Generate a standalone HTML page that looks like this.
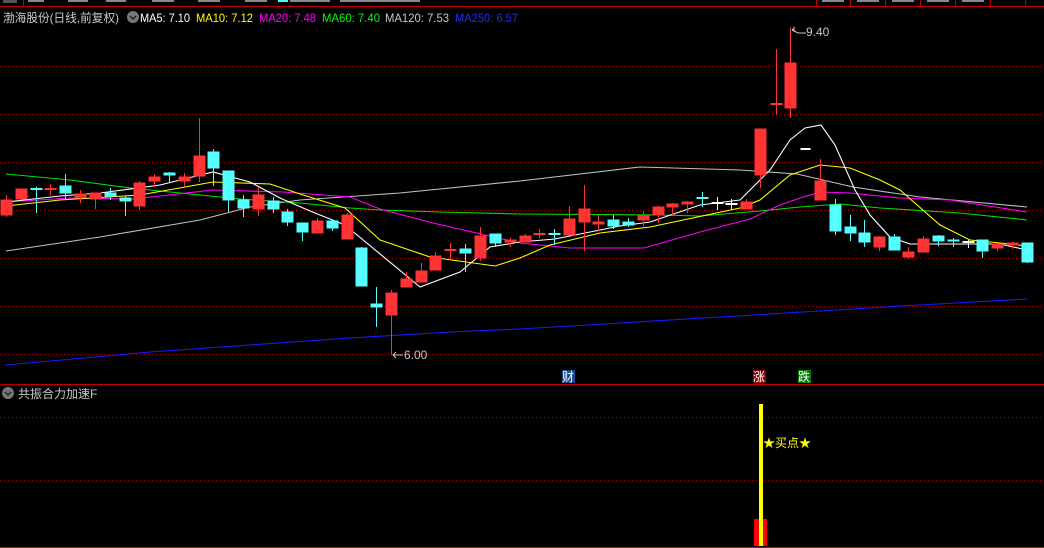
<!DOCTYPE html>
<html><head><meta charset="utf-8"><style>
html,body{margin:0;padding:0;background:#000;width:1044px;height:548px;overflow:hidden}
svg{display:block}
text{font-family:"Liberation Sans","Noto Sans CJK SC",sans-serif;font-size:12px}
</style></head><body>
<svg width="1044" height="548" viewBox="0 0 1044 548" xmlns="http://www.w3.org/2000/svg">
<rect width="1044" height="548" fill="#000"/>
<!-- top strip -->
<line x1="0" y1="6.5" x2="1044" y2="6.5" stroke="#c00000" stroke-width="1"/>
<line x1="23.5" y1="0" x2="23.5" y2="6" stroke="#c00000"/>
<rect x="3" y="0" width="14" height="3" fill="#555"/>
<g stroke="#c00000"><line x1="816.5" y1="0" x2="816.5" y2="6"/><line x1="850.5" y1="0" x2="850.5" y2="6"/><line x1="885.5" y1="0" x2="885.5" y2="6"/><line x1="920.5" y1="0" x2="920.5" y2="6"/><line x1="955.5" y1="0" x2="955.5" y2="6"/><line x1="990.5" y1="0" x2="990.5" y2="6"/><line x1="1025.5" y1="0" x2="1025.5" y2="6"/></g>
<g fill="#888"><rect x="28" y="0" width="16" height="2"/><rect x="68" y="0" width="20" height="2"/><rect x="106" y="0" width="20" height="2"/><rect x="152" y="0" width="22" height="2"/><rect x="198" y="0" width="22" height="2"/><rect x="245" y="0" width="22" height="2"/><rect x="290" y="0" width="40" height="2"/><rect x="340" y="0" width="80" height="2"/><rect x="822" y="0" width="22" height="2"/><rect x="857" y="0" width="22" height="2"/><rect x="892" y="0" width="22" height="2"/><rect x="927" y="0" width="22" height="2"/><rect x="962" y="0" width="22" height="2"/></g>
<rect x="278" y="0" width="10" height="2" fill="#4ff"/>
<!-- header -->
<text x="3" y="22" fill="#c8c8c8" textLength="116" lengthAdjust="spacingAndGlyphs">渤海股份(日线,前复权)</text>
<circle cx="133" cy="17" r="6" fill="#777"/>
<path d="M130 16 L133 19 L136 16" stroke="#222" stroke-width="1.5" fill="none"/>
<text x="140" y="22" fill="#fff" textLength="50" lengthAdjust="spacingAndGlyphs">MA5: 7.10</text>
<text x="196" y="22" fill="#ff0" textLength="57" lengthAdjust="spacingAndGlyphs">MA10: 7.12</text>
<text x="259" y="22" fill="#f0f" textLength="57" lengthAdjust="spacingAndGlyphs">MA20: 7.48</text>
<text x="322" y="22" fill="#0f0" textLength="58" lengthAdjust="spacingAndGlyphs">MA60: 7.40</text>
<text x="385" y="22" fill="#c8c8c8" textLength="64" lengthAdjust="spacingAndGlyphs">MA120: 7.53</text>
<text x="455" y="22" fill="#1a2cff" textLength="63" lengthAdjust="spacingAndGlyphs">MA250: 6.57</text>
<!-- grid -->
<g stroke="#b00000" stroke-dasharray="1,3" stroke-width="1">
<line x1="0" y1="66.5" x2="1044" y2="66.5"/><line x1="0" y1="114.5" x2="1044" y2="114.5"/><line x1="0" y1="162.5" x2="1044" y2="162.5"/><line x1="0" y1="210.5" x2="1044" y2="210.5"/><line x1="0" y1="258.5" x2="1044" y2="258.5"/><line x1="0" y1="306.5" x2="1044" y2="306.5"/><line x1="0" y1="354.5" x2="1044" y2="354.5"/>
<line x1="0" y1="417.5" x2="1044" y2="417.5"/><line x1="0" y1="480.5" x2="1044" y2="480.5"/>
</g>
<!-- MA lines -->
<g fill="none" stroke-width="1.1">
<polyline stroke="#1a1aff" points="5,365 73,359 150,352 250,345 350,338 450,332 520,329 620,323 720,317 820,311 920,305 1027,299"/>
<polyline stroke="#c0c0c0" points="6,251 100,237 200,220 250,207 300,200 400,193 520,181 640,167 740,170 797,174 853,187 920,197 1027,207"/>
<polyline stroke="#00e000" points="6,174 70,180 130,188 200,195 240,199 300,203 350,208 380,210 440,212 520,214 660,215 700,216 760,211 800,207 840,204 880,208 960,213 1027,220"/>
<polyline stroke="#ff00ff" points="6,202 70,198 133,199 213,190 283,192 350,197 380,209 433,223 520,243 570,248 644,248 700,232 750,219 780,205 800,198 820,192 850,193 900,198 950,200 1027,212"/>
<polyline stroke="#ffff00" points="6,206 60,200 140,195 213,182 270,184 300,194 345,208 380,240 430,257 495,266 520,258 550,245 600,233 650,227 740,208 760,200 790,175 820,165 850,168 880,180 900,190 940,225 970,240 1000,243 1027,246"/>
<polyline stroke="#ffffff" points="6,202 60,196 100,193 160,185 213,172 250,182 280,198 310,211 345,225 420,287 460,272 490,247 520,242 555,239 620,226 650,222 700,205 740,200 770,170 790,140 805,128 821,125 835,145 855,190 870,215 890,237 910,244 960,244 1000,244 1027,250"/>
</g>
<g id="c">
<g fill="#ff3333" stroke="#ff3333" stroke-width="1">
<line x1="6.5" y1="195" x2="6.5" y2="217"/><rect x="1" y="200" width="11" height="15"/>
<rect x="16" y="189" width="11" height="10"/>
<line x1="50.5" y1="184" x2="50.5" y2="195"/><rect x="45" y="188.5" width="11" height="1"/>
<line x1="80.5" y1="190" x2="80.5" y2="203"/><rect x="75" y="194" width="11" height="3"/>
<line x1="95.5" y1="193" x2="95.5" y2="209"/><rect x="90" y="193" width="11" height="6"/>
<line x1="139.5" y1="181" x2="139.5" y2="210"/><rect x="134" y="183" width="11" height="23"/>
<line x1="154.5" y1="174" x2="154.5" y2="187"/><rect x="149" y="177" width="11" height="4"/>
<line x1="184.5" y1="173" x2="184.5" y2="187"/><rect x="179" y="177" width="11" height="4"/>
<line x1="199.5" y1="118" x2="199.5" y2="182"/><rect x="194" y="156" width="11" height="20"/>
<line x1="258.5" y1="187" x2="258.5" y2="216"/><rect x="253" y="195" width="11" height="14"/>
<line x1="317.5" y1="218" x2="317.5" y2="233"/><rect x="312" y="221" width="11" height="12"/>
<line x1="347.5" y1="213" x2="347.5" y2="239"/><rect x="342" y="215" width="11" height="24"/>
<line x1="391.5" y1="290" x2="391.5" y2="355"/><rect x="386" y="293" width="11" height="22"/>
<line x1="406.5" y1="272" x2="406.5" y2="287"/><rect x="401" y="279" width="11" height="8"/>
<line x1="421.5" y1="263" x2="421.5" y2="282"/><rect x="416" y="271" width="11" height="11"/>
<line x1="435.5" y1="252" x2="435.5" y2="270"/><rect x="430" y="256" width="11" height="14"/>
<line x1="450.5" y1="243" x2="450.5" y2="260"/><rect x="445" y="249.5" width="11" height="1"/>
<line x1="480.5" y1="227" x2="480.5" y2="261"/><rect x="475" y="236" width="11" height="22"/>
<line x1="510.5" y1="238" x2="510.5" y2="247"/><rect x="505" y="240" width="11" height="2"/>
<line x1="525.5" y1="234" x2="525.5" y2="242"/><rect x="520" y="236" width="11" height="6"/>
<line x1="539.5" y1="229" x2="539.5" y2="238"/><rect x="534" y="233.5" width="11" height="1"/>
<line x1="569.5" y1="206" x2="569.5" y2="235"/><rect x="564" y="219" width="11" height="16"/>
<line x1="584.5" y1="185" x2="584.5" y2="251"/><rect x="579" y="209" width="11" height="13"/>
<line x1="598.5" y1="215" x2="598.5" y2="231"/><rect x="593" y="222" width="11" height="2"/>
<line x1="643.5" y1="211" x2="643.5" y2="226"/><rect x="638" y="216" width="11" height="4"/>
<line x1="658.5" y1="206" x2="658.5" y2="223"/><rect x="653" y="207" width="11" height="8"/>
<line x1="672.5" y1="203" x2="672.5" y2="215"/><rect x="667" y="204" width="11" height="3"/>
<line x1="687.5" y1="201" x2="687.5" y2="213"/><rect x="682" y="202" width="11" height="2"/>
<line x1="746.5" y1="199" x2="746.5" y2="209"/><rect x="741" y="202" width="11" height="7"/>
<line x1="760.5" y1="129" x2="760.5" y2="188"/><rect x="755" y="129" width="11" height="46"/>
<line x1="776.5" y1="49" x2="776.5" y2="115"/><rect x="771" y="103.5" width="11" height="1"/>
<line x1="790.5" y1="27" x2="790.5" y2="118"/><rect x="785" y="63" width="11" height="45"/>
<line x1="820.5" y1="159" x2="820.5" y2="200"/><rect x="815" y="181" width="11" height="19"/>
<line x1="879.5" y1="236" x2="879.5" y2="251"/><rect x="874" y="237" width="11" height="10"/>
<line x1="908.5" y1="247" x2="908.5" y2="259"/><rect x="903" y="252" width="11" height="5"/>
<line x1="923.5" y1="236" x2="923.5" y2="252"/><rect x="918" y="239" width="11" height="13"/>
<line x1="997.5" y1="243" x2="997.5" y2="251"/><rect x="992" y="244" width="11" height="4"/>
<line x1="1012.5" y1="242" x2="1012.5" y2="249"/><rect x="1007" y="243" width="11" height="2"/>
</g>
<g fill="#55ffff" stroke="#55ffff" stroke-width="1">
<line x1="36.5" y1="187" x2="36.5" y2="213"/><rect x="31" y="188.5" width="11" height="1"/>
<line x1="65.5" y1="174" x2="65.5" y2="200"/><rect x="60" y="186" width="11" height="7"/>
<line x1="110.5" y1="188" x2="110.5" y2="200"/><rect x="105" y="193" width="11" height="3"/>
<line x1="125.5" y1="196" x2="125.5" y2="216"/><rect x="120" y="198" width="11" height="3"/>
<line x1="169.5" y1="172" x2="169.5" y2="183"/><rect x="164" y="173" width="11" height="2"/>
<line x1="213.5" y1="149" x2="213.5" y2="186"/><rect x="208" y="152" width="11" height="16"/>
<line x1="228.5" y1="171" x2="228.5" y2="212"/><rect x="223" y="171" width="11" height="29"/>
<line x1="243.5" y1="195" x2="243.5" y2="217"/><rect x="238" y="200" width="11" height="8"/>
<line x1="273.5" y1="197" x2="273.5" y2="213"/><rect x="268" y="201" width="11" height="8"/>
<line x1="287.5" y1="209" x2="287.5" y2="226"/><rect x="282" y="212" width="11" height="10"/>
<line x1="302.5" y1="223" x2="302.5" y2="241"/><rect x="297" y="223" width="11" height="9"/>
<line x1="332.5" y1="221" x2="332.5" y2="231"/><rect x="327" y="221" width="11" height="7"/>
<line x1="361.5" y1="247" x2="361.5" y2="286"/><rect x="356" y="248" width="11" height="38"/>
<line x1="376.5" y1="287" x2="376.5" y2="327"/><rect x="371" y="304" width="11" height="3"/>
<line x1="465.5" y1="244" x2="465.5" y2="272"/><rect x="460" y="249" width="11" height="4"/>
<line x1="495.5" y1="234" x2="495.5" y2="247"/><rect x="490" y="234" width="11" height="9"/>
<line x1="554.5" y1="229" x2="554.5" y2="245"/><rect x="549" y="233.5" width="11" height="1"/>
<line x1="613.5" y1="215" x2="613.5" y2="229"/><rect x="608" y="220" width="11" height="6"/>
<line x1="628.5" y1="218" x2="628.5" y2="227"/><rect x="623" y="222" width="11" height="3"/>
<line x1="702.5" y1="192" x2="702.5" y2="207"/><rect x="697" y="197.5" width="11" height="1"/>
<line x1="835.5" y1="199" x2="835.5" y2="235"/><rect x="830" y="205" width="11" height="26"/>
<line x1="850.5" y1="215" x2="850.5" y2="241"/><rect x="845" y="227" width="11" height="6"/>
<line x1="864.5" y1="220" x2="864.5" y2="247"/><rect x="859" y="233" width="11" height="9"/>
<line x1="894.5" y1="234" x2="894.5" y2="250"/><rect x="889" y="237" width="11" height="13"/>
<line x1="938.5" y1="235" x2="938.5" y2="246"/><rect x="933" y="236" width="11" height="5"/>
<line x1="953.5" y1="238" x2="953.5" y2="247"/><rect x="948" y="240" width="11" height="1"/>
<line x1="982.5" y1="240" x2="982.5" y2="258"/><rect x="977" y="240" width="11" height="11"/>
<line x1="1027.5" y1="243" x2="1027.5" y2="263"/><rect x="1022" y="243" width="11" height="19"/>
</g>
<g fill="#fff" stroke="#fff" stroke-width="1">
<line x1="717.5" y1="197" x2="717.5" y2="210"/><rect x="712" y="202.5" width="11" height="1"/>
<line x1="731.5" y1="199" x2="731.5" y2="210"/><rect x="726" y="203.5" width="11" height="1"/>
<line x1="968.5" y1="240" x2="968.5" y2="248"/><rect x="963" y="241.5" width="11" height="1"/>
<rect x="801" y="148.5" width="9" height="1"/>
</g>
</g>
<g stroke="#c8c8c8" fill="none" stroke-width="1">
<path d="M792 30 L798 33 L806 33"/><path d="M792 30 L795 27 M792 30 L795 30"/>
<path d="M393 355 L403 355"/><path d="M393 355 L396 352 M393 355 L396 358"/>
</g>
<text x="806" y="36" fill="#c8c8c8">9.40</text>
<text x="404" y="359" fill="#c8c8c8">6.00</text>
<rect x="562" y="370" width="13" height="13" fill="#1a4a8a"/><text x="562" y="381" fill="#fff">财</text>
<rect x="753" y="370" width="13" height="13" fill="#8b0000"/><text x="753" y="381" fill="#fff">涨</text>
<rect x="798" y="370" width="13" height="13" fill="#007a00"/><text x="798" y="381" fill="#fff">跌</text>
<line x1="0" y1="384.5" x2="1044" y2="384.5" stroke="#c00000"/>
<line x1="0" y1="547.5" x2="1044" y2="547.5" stroke="#d00000"/>
<circle cx="8" cy="393" r="6" fill="#777"/>
<path d="M5 392 L8 395 L11 392" stroke="#222" stroke-width="1.5" fill="none"/>
<text x="18" y="398" fill="#c8c8c8">共振合力加速F</text>
<rect x="754" y="519" width="13" height="27" fill="#ff0000"/>
<rect x="759" y="404" width="4" height="142" fill="#ffff00"/>
<text x="763" y="447" fill="#ffff00">★买点★</text>
</svg>
</body></html>
